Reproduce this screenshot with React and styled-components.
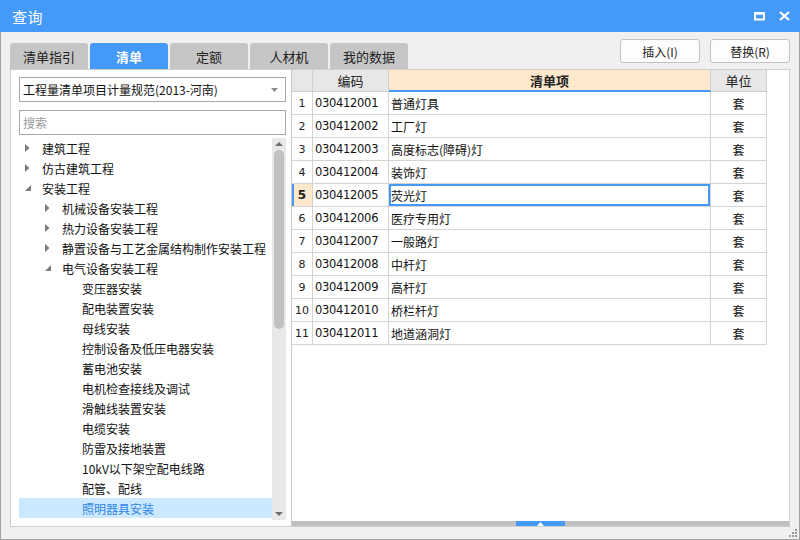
import React from 'react';
import styled, { createGlobalStyle } from 'styled-components';

const GlobalStyle = createGlobalStyle`
  html, body {
    margin: 0;
    padding: 0;
    background: #f0f0f0;
  }
  body {
    font-family: "Noto Sans CJK SC", "Liberation Sans", sans-serif;
    font-size: 12px;
    color: #111;
  }
  * {
    box-sizing: border-box;
  }
`;

const BLUE = '#4599f8';

const Window = styled.div`
  width: 800px;
  height: 540px;
  display: flex;
  flex-direction: column;
  background: #f0f0f0;
`;

const TitleBar = styled.div`
  height: 32px;
  flex-shrink: 0;
  background: ${BLUE};
  color: #fff;
  display: flex;
  align-items: center;
  padding: 0 10px 0 12px;
`;

const Title = styled.div`
  flex: 1;
  font-size: 15px;
  letter-spacing: 0.5px;
`;

const TitleButtons = styled.div`
  display: flex;
  align-items: center;
  gap: 14px;
`;

const Body = styled.div`
  flex: 1;
  display: flex;
  flex-direction: column;
  padding: 0 9px;
  border: 1px solid #a3a3a3;
  border-top: none;
`;

const Toolbar = styled.div`
  height: 37px;
  display: flex;
  justify-content: space-between;
`;

const Tabs = styled.div`
  display: flex;
  align-items: flex-end;
  gap: 2px;
`;

const Tab = styled.div`
  width: 78px;
  height: 26px;
  border-radius: 3px 3px 0 0;
  background: ${(p) => (p.$active ? BLUE : '#c6c6c6')};
  color: ${(p) => (p.$active ? '#fff' : '#222')};
  font-weight: ${(p) => (p.$active ? 700 : 400)};
  font-size: 13px;
  display: flex;
  align-items: center;
  justify-content: center;
`;

const Actions = styled.div`
  display: flex;
  gap: 10px;
  padding-top: 7px;
`;

const Button = styled.div`
  width: 80px;
  height: 24px;
  border: 1px solid #c2c2c2;
  border-radius: 3px;
  background: #fdfdfd;
  color: #222;
  font-size: 12px;
  display: flex;
  align-items: center;
  justify-content: center;
`;

const Frame = styled.div`
  height: 458px;
  display: flex;
  border: 1px solid #cfcfcf;
  background: #fff;
`;

const LeftPane = styled.div`
  width: 281px;
  display: flex;
  flex-direction: column;
  padding: 7px 5px 6px 8px;
  border-right: 1px solid #c8c8c8;
`;

const SelectBox = styled.div`
  height: 25px;
  border: 1px solid #a9a9a9;
  display: flex;
  align-items: center;
  padding: 0 7px 0 3px;
  font-size: 12px;
  color: #111;
`;

const SelectText = styled.div`
  flex: 1;
`;

const SearchBox = styled.div`
  height: 25px;
  margin-top: 8px;
  border: 1px solid #a9a9a9;
  display: flex;
  align-items: center;
  padding: 0 3px;
  color: #9a9a9a;
  font-size: 12px;
`;

const TreeArea = styled.div`
  margin-top: 3px;
  flex: 1;
  display: flex;
  min-height: 0;
`;

const TreeList = styled.div`
  flex: 1;
  overflow: hidden;
`;

const TreeRow = styled.div`
  height: 20px;
  display: flex;
  align-items: center;
  padding-left: ${(p) => p.$level * 20 + 6}px;
  background: ${(p) => (p.$selected ? '#cce8ff' : 'transparent')};
  color: ${(p) => (p.$selected ? '#2f86e8' : '#111')};
  white-space: nowrap;
  font-size: 12px;
`;

const Arrow = styled.span`
  width: 17px;
  height: 20px;
  display: flex;
  align-items: center;
  flex-shrink: 0;
`;

const VScroll = styled.div`
  width: 14px;
  background: #e8e8e8;
  display: flex;
  flex-direction: column;
  align-items: center;
`;

const ScrollArrow = styled.div`
  height: 12px;
  display: flex;
  align-items: center;
  justify-content: center;
`;

const Thumb = styled.div`
  width: 10px;
  height: 179px;
  border-radius: 5px;
  background: #c1c1c1;
`;

const Spacer = styled.div`
  flex: 1;
`;

const RightPane = styled.div`
  flex: 1;
  display: flex;
  flex-direction: column;
`;

const GridArea = styled.div`
  flex: 1;
`;

const Row = styled.div`
  display: grid;
  grid-template-columns: 21px 76px 322px 56px;
  height: ${(p) => (p.$header ? 22 : 23)}px;
`;

const HeadCell = styled.div`
  background: ${(p) => (p.$accent ? '#fde8cb' : '#e7e7e7')};
  border-right: 1px solid #cfcfcf;
  border-bottom: ${(p) => (p.$accent ? `2px solid ${BLUE}` : '1px solid #cfcfcf')};
  font-weight: ${(p) => (p.$accent ? 700 : 400)};
  font-size: 13px;
  color: #222;
  display: flex;
  align-items: center;
  justify-content: center;
`;

const NumCell = styled.div`
  border-right: 1px solid #d4d4d4;
  border-bottom: 1px solid #d4d4d4;
  background: ${(p) => (p.$active ? '#fde8cb' : '#fff')};
  box-shadow: ${(p) => (p.$active ? `inset 2px 0 0 ${BLUE}` : 'none')};
  font-weight: ${(p) => (p.$active ? 700 : 400)};
  font-family: "DejaVu Sans", "Liberation Sans", sans-serif;
  font-size: ${(p) => (p.$active ? 12 : 11)}px;
  color: #222;
  display: flex;
  align-items: center;
  justify-content: center;
`;

const Cell = styled.div`
  border-right: 1px solid #d4d4d4;
  border-bottom: 1px solid #d4d4d4;
  display: flex;
  align-items: center;
  justify-content: ${(p) => (p.$center ? 'center' : 'flex-start')};
  padding-left: ${(p) => (p.$center ? 0 : 2)}px;
  box-shadow: ${(p) => (p.$focus ? `inset 0 0 0 2px ${BLUE}` : 'none')};
  font-size: 12px;
  color: #111;
  white-space: nowrap;
`;

const CodeText = styled.span`
  font-family: "DejaVu Sans", "Liberation Sans", sans-serif;
  font-size: 11.5px;
  letter-spacing: -0.3px;
`;

const HScroll = styled.div`
  height: 5px;
  background: #c0c0c0;
  display: flex;
  justify-content: center;
`;

const HThumb = styled.div`
  width: 49px;
  height: 5px;
  background: ${BLUE};
  display: flex;
  align-items: center;
  justify-content: center;
`;

const StatusStrip = styled.div`
  flex: 1;
  display: flex;
  justify-content: flex-end;
  align-items: flex-end;
  margin-right: -8px;
  padding-bottom: 1px;
`;

const tree = [
  { text: '建筑工程', level: 0, state: 'closed' },
  { text: '仿古建筑工程', level: 0, state: 'closed' },
  { text: '安装工程', level: 0, state: 'open' },
  { text: '机械设备安装工程', level: 1, state: 'closed' },
  { text: '热力设备安装工程', level: 1, state: 'closed' },
  { text: '静置设备与工艺金属结构制作安装工程', level: 1, state: 'closed' },
  { text: '电气设备安装工程', level: 1, state: 'open' },
  { text: '变压器安装', level: 2 },
  { text: '配电装置安装', level: 2 },
  { text: '母线安装', level: 2 },
  { text: '控制设备及低压电器安装', level: 2 },
  { text: '蓄电池安装', level: 2 },
  { text: '电机检查接线及调试', level: 2 },
  { text: '滑触线装置安装', level: 2 },
  { text: '电缆安装', level: 2 },
  { text: '防雷及接地装置', level: 2 },
  { text: '10kV以下架空配电线路', level: 2 },
  { text: '配管、配线', level: 2 },
  { text: '照明器具安装', level: 2, selected: true },
  { text: '附属工程', level: 2 },
];

const items = [
  '普通灯具',
  '工厂灯',
  '高度标志(障碍)灯',
  '装饰灯',
  '荧光灯',
  '医疗专用灯',
  '一般路灯',
  '中杆灯',
  '高杆灯',
  '桥栏杆灯',
  '地道涵洞灯',
];

const TreeArrow = ({ state }) => {
  if (!state) return <Arrow />;
  return (
    <Arrow>
      {state === 'closed' ? (
        <svg width="5" height="8" viewBox="0 0 5 8">
          <path d="M0 0 L4.5 4 L0 8 Z" fill="#7c7c7c" />
        </svg>
      ) : (
        <svg width="6" height="6" viewBox="0 0 6 6">
          <path d="M6 0 L6 6 L0 6 Z" fill="#7c7c7c" />
        </svg>
      )}
    </Arrow>
  );
};

const App = () => {
  return (
    <Window>
      <GlobalStyle />
      <TitleBar>
        <Title>查询</Title>
        <TitleButtons>
          <svg width="11" height="9" viewBox="0 0 11 9">
            <rect x="1" y="1.5" width="9" height="6" fill="none" stroke="#fff" strokeWidth="2" />
            <rect x="0" y="0" width="11" height="2.5" fill="#fff" />
          </svg>
          <svg width="11" height="10" viewBox="0 0 11 10">
            <path d="M1 1 L10 9 M10 1 L1 9" stroke="#fff" strokeWidth="2.2" />
          </svg>
        </TitleButtons>
      </TitleBar>
      <Body>
        <Toolbar>
          <Tabs>
            <Tab>清单指引</Tab>
            <Tab $active>清单</Tab>
            <Tab>定额</Tab>
            <Tab>人材机</Tab>
            <Tab>我的数据</Tab>
          </Tabs>
          <Actions>
            <Button>插入(I)</Button>
            <Button>替换(R)</Button>
          </Actions>
        </Toolbar>
        <Frame>
          <LeftPane>
            <SelectBox>
              <SelectText>工程量清单项目计量规范(2013-河南)</SelectText>
              <svg width="7" height="4" viewBox="0 0 7 4">
                <path d="M0 0 L7 0 L3.5 4 Z" fill="#8a8a8a" />
              </svg>
            </SelectBox>
            <SearchBox>搜索</SearchBox>
            <TreeArea>
              <TreeList>
                {tree.map((n) => (
                  <TreeRow key={n.text} $level={n.level} $selected={n.selected}>
                    <TreeArrow state={n.state} />
                    {n.text}
                  </TreeRow>
                ))}
              </TreeList>
              <VScroll>
                <ScrollArrow>
                  <svg width="8" height="4" viewBox="0 0 8 4">
                    <path d="M4 0 L8 4 L0 4 Z" fill="#6e6e6e" />
                  </svg>
                </ScrollArrow>
                <Thumb />
                <Spacer />
                <ScrollArrow>
                  <svg width="8" height="4" viewBox="0 0 8 4">
                    <path d="M0 0 L8 0 L4 4 Z" fill="#6e6e6e" />
                  </svg>
                </ScrollArrow>
              </VScroll>
            </TreeArea>
          </LeftPane>
          <RightPane>
            <GridArea>
              <Row $header>
                <HeadCell />
                <HeadCell>编码</HeadCell>
                <HeadCell $accent>清单项</HeadCell>
                <HeadCell>单位</HeadCell>
              </Row>
              {items.map((name, i) => {
                const active = i === 4;
                return (
                  <Row key={name}>
                    <NumCell $active={active}>{i + 1}</NumCell>
                    <Cell>
                      <CodeText>{`0304120${String(i + 1).padStart(2, '0')}`}</CodeText>
                    </Cell>
                    <Cell $focus={active}>{name}</Cell>
                    <Cell $center>套</Cell>
                  </Row>
                );
              })}
            </GridArea>
            <HScroll>
              <HThumb>
                <svg width="7" height="4" viewBox="0 0 7 4">
                  <path d="M3.5 0 L7 4 L0 4 Z" fill="#fff" />
                </svg>
              </HThumb>
            </HScroll>
          </RightPane>
        </Frame>
        <StatusStrip>
          <svg width="10" height="10" viewBox="0 0 10 10">
            <rect x="7" y="1" width="2" height="2" fill="#9a9a9a" />
            <rect x="4" y="4" width="2" height="2" fill="#9a9a9a" />
            <rect x="7" y="4" width="2" height="2" fill="#9a9a9a" />
            <rect x="1" y="7" width="2" height="2" fill="#9a9a9a" />
            <rect x="4" y="7" width="2" height="2" fill="#9a9a9a" />
            <rect x="7" y="7" width="2" height="2" fill="#9a9a9a" />
          </svg>
        </StatusStrip>
      </Body>
    </Window>
  );
};

export default App;
